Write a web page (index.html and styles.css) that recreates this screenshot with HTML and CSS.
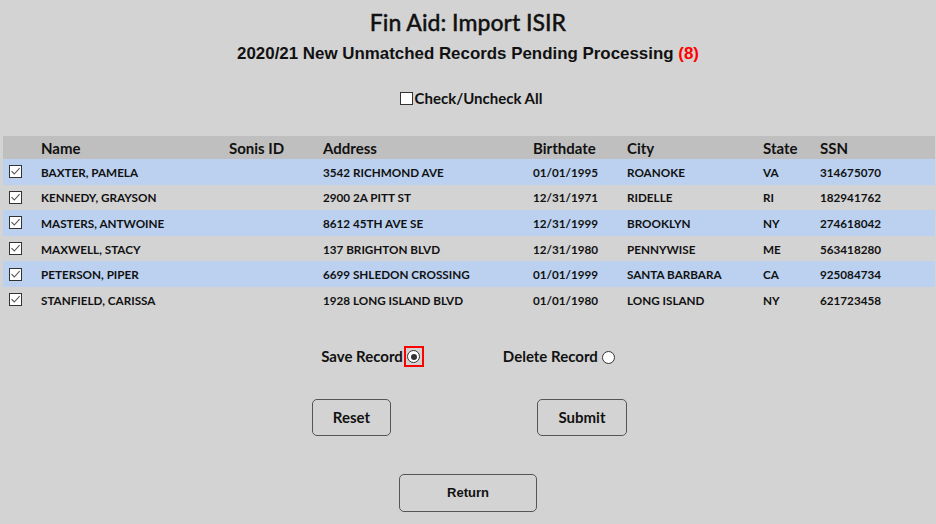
FILE: index.html
```html
<!DOCTYPE html>
<html>
<head>
<meta charset="utf-8">
<link rel="stylesheet" href="styles.css">
</head>
<body>
<h1 class="title">Fin Aid: Import ISIR</h1>
<h2 class="subtitle">2020/21 New Unmatched Records Pending Processing <span class="count">(8)</span></h2>
<div class="check-all">
  <span class="box"></span><span class="check-all-label">Check/Uncheck All</span>
</div>
<table class="records">
  <colgroup>
    <col class="c-cb"><col class="c-name"><col class="c-sonis"><col class="c-addr"><col class="c-birth"><col class="c-city"><col class="c-state"><col class="c-ssn">
  </colgroup>
  <thead>
    <tr><th></th><th>Name</th><th>Sonis ID</th><th>Address</th><th>Birthdate</th><th>City</th><th>State</th><th>SSN</th></tr>
  </thead>
  <tbody>
    <tr class="alt"><td class="cb"><span class="box"><svg viewBox="0 0 11 11"><path d="M1.5 5.2 L4.3 8 L9.6 2.2" fill="none" stroke="#555" stroke-width="1.1"/></svg></span></td><td>BAXTER, PAMELA</td><td></td><td>3542 RICHMOND AVE</td><td>01/01/1995</td><td>ROANOKE</td><td>VA</td><td>314675070</td></tr>
    <tr><td class="cb"><span class="box"><svg viewBox="0 0 11 11"><path d="M1.5 5.2 L4.3 8 L9.6 2.2" fill="none" stroke="#555" stroke-width="1.1"/></svg></span></td><td>KENNEDY, GRAYSON</td><td></td><td>2900 2A PITT ST</td><td>12/31/1971</td><td>RIDELLE</td><td>RI</td><td>182941762</td></tr>
    <tr class="alt"><td class="cb"><span class="box"><svg viewBox="0 0 11 11"><path d="M1.5 5.2 L4.3 8 L9.6 2.2" fill="none" stroke="#555" stroke-width="1.1"/></svg></span></td><td>MASTERS, ANTWOINE</td><td></td><td>8612 45TH AVE SE</td><td>12/31/1999</td><td>BROOKLYN</td><td>NY</td><td>274618042</td></tr>
    <tr><td class="cb"><span class="box"><svg viewBox="0 0 11 11"><path d="M1.5 5.2 L4.3 8 L9.6 2.2" fill="none" stroke="#555" stroke-width="1.1"/></svg></span></td><td>MAXWELL, STACY</td><td></td><td>137 BRIGHTON BLVD</td><td>12/31/1980</td><td>PENNYWISE</td><td>ME</td><td>563418280</td></tr>
    <tr class="alt"><td class="cb"><span class="box"><svg viewBox="0 0 11 11"><path d="M1.5 5.2 L4.3 8 L9.6 2.2" fill="none" stroke="#555" stroke-width="1.1"/></svg></span></td><td>PETERSON, PIPER</td><td></td><td>6699 SHLEDON CROSSING</td><td>01/01/1999</td><td>SANTA BARBARA</td><td>CA</td><td>925084734</td></tr>
    <tr><td class="cb"><span class="box"><svg viewBox="0 0 11 11"><path d="M1.5 5.2 L4.3 8 L9.6 2.2" fill="none" stroke="#555" stroke-width="1.1"/></svg></span></td><td>STANFIELD, CARISSA</td><td></td><td>1928 LONG ISLAND BLVD</td><td>01/01/1980</td><td>LONG ISLAND</td><td>NY</td><td>621723458</td></tr>
  </tbody>
</table>
<div class="choices">
  <div class="choice"><span class="choice-label">Save Record</span><span class="focus-ring"><span class="radio selected"></span></span></div>
  <div class="choice"><span class="choice-label">Delete Record</span><span class="radio plain"></span></div>
</div>
<div class="actions">
  <button class="btn btn-reset">Reset</button>
  <button class="btn btn-submit">Submit</button>
</div>
<div class="return-row">
  <button class="btn btn-return">Return</button>
</div>
</body>
</html>
```
FILE: styles.css
```css
html, body {
  margin: 0;
  padding: 0;
  background: #d3d3d3;
  color: #111;
  font-family: "Lato", "Liberation Sans", sans-serif;
}
body {
  width: 936px;
  height: 524px;
  overflow: hidden;
}
.title {
  margin: 0;
  padding-top: 9px;
  height: 26px;
  line-height: 26px;
  font-size: 23px;
  font-weight: 500;
  text-align: center;
  color: #111;
  -webkit-text-stroke: 0.35px #111;
}
.subtitle {
  margin: 7px 0 0;
  height: 24px;
  line-height: 24px;
  font-family: "Liberation Sans", Arial, sans-serif;
  font-size: 16.9px;
  font-weight: bold;
  text-align: center;
}
.count { color: #f00; }
.check-all {
  display: flex;
  justify-content: center;
  align-items: center;
  margin-top: 23px;
  height: 18px;
  padding-left: 6px;
}
.check-all .box { margin-right: 2px; }
.check-all-label {
  font-size: 15px;
  font-weight: bold;
  line-height: 18px;
}
.box {
  display: inline-block;
  width: 11px;
  height: 11px;
  border: 1px solid #333;
  background: #fff;
  box-sizing: content-box;
}
.box svg { display: block; width: 11px; height: 11px; }
.records {
  margin: 29px 0 0 3px;
  width: 932px;
  table-layout: fixed;
  border-collapse: collapse;
}
.c-cb { width: 33px; }
.c-name { width: 188px; }
.c-sonis { width: 94px; }
.c-addr { width: 210px; }
.c-birth { width: 94px; }
.c-city { width: 136px; }
.c-state { width: 57px; }
.c-ssn { width: 120px; }
.records th {
  background: #bfbfbf;
  height: 23px;
  padding: 0 0 0 5px;
  text-align: left;
  font-size: 15px;
  font-weight: bold;
  color: #111;
}
.records td {
  height: 25.6px;
  padding: 0 0 0 5px;
  font-size: 11.7px;
  font-weight: bold;
  color: #111;
  white-space: nowrap;
}
.records td.cb { padding-left: 6px; line-height: 0; }
.records tr.alt td { background: #bbd1ef; }
.choices {
  display: flex;
  justify-content: center;
  gap: 79px;
  margin-top: 32px;
  padding-left: 0;
  height: 22px;
  align-items: center;
}
.choice { display: flex; align-items: center; }
.choice-label {
  font-size: 15px;
  font-weight: bold;
}
.focus-ring {
  display: inline-flex;
  align-items: center;
  justify-content: center;
  width: 16px;
  height: 17px;
  border: 2px solid #f00;
  margin-left: 1px;
  margin-top: 2px;
}
.radio {
  display: inline-block;
  width: 11px;
  height: 11px;
  border: 1px solid #333;
  border-radius: 50%;
  background: #fff;
  position: relative;
}
.radio.plain { margin-left: 4px; margin-top: 4px; }
.radio.selected::after {
  content: "";
  position: absolute;
  left: 2.5px;
  top: 2.5px;
  width: 6px;
  height: 6px;
  border-radius: 50%;
  background: #333;
}
.actions {
  display: flex;
  justify-content: center;
  gap: 146px;
  margin-top: 32px;
  padding-left: 3px;
}
.btn {
  background: transparent;
  border: 1px solid #555;
  border-radius: 5px;
  color: #111;
  font-weight: bold;
  padding: 0;
  height: 37px;
}
.btn-reset, .btn-submit {
  font-family: "Lato", "Liberation Sans", sans-serif;
  font-size: 15px;
}
.btn-reset { width: 79px; }
.btn-submit { width: 90px; }
.return-row {
  display: flex;
  justify-content: center;
  margin-top: 38px;
}
.btn-return {
  width: 138px;
  height: 38px;
  font-family: "Liberation Sans", Arial, sans-serif;
  font-size: 13px;
}
```
